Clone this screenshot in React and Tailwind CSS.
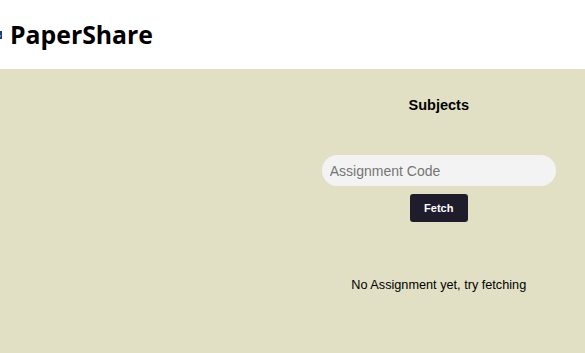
export default function App() {
  return (
    <div className="w-[585px] h-[353px] flex flex-col bg-[#e2e0c4] overflow-hidden" style={{ fontFamily: '"Liberation Sans", Arial, sans-serif' }}>
      <header className="h-[69px] bg-white flex items-center shrink-0">
        <svg width="3" height="14" viewBox="0 0 3 14" className="mr-[7px] mt-[1px]">
          <path d="M0 3 H2 V11 H0 Z" fill="#1d3f73" />
          <path d="M0 7 H1 V9 H0 Z" fill="#5a86c4" />
        </svg>
        <h1 className="text-[24.8px] font-bold text-black leading-none" style={{ fontFamily: '"Open Sans", sans-serif' }}>PaperShare</h1>
      </header>
      <main className="grid grid-cols-2 flex-1">
        <div></div>
        <div className="flex flex-col items-center">
          <h3 className="mt-[28px] text-[14.5px] font-bold text-black leading-[16px]">Subjects</h3>
          <input
            placeholder="Assignment Code"
            className="mt-[42px] w-4/5 h-[31px] rounded-full bg-[#f3f3f3] px-[8px] text-[14px] text-black placeholder:text-[#757575] outline-none"
          />
          <button className="mt-[8px] w-[58px] h-[28px] rounded-[3px] bg-[#1f1d2c] text-white text-[11px] font-bold">Fetch</button>
          <p className="mt-[55px] text-[12.7px] text-black leading-[17px]">No Assignment yet, try fetching</p>
        </div>
      </main>
    </div>
  );
}
